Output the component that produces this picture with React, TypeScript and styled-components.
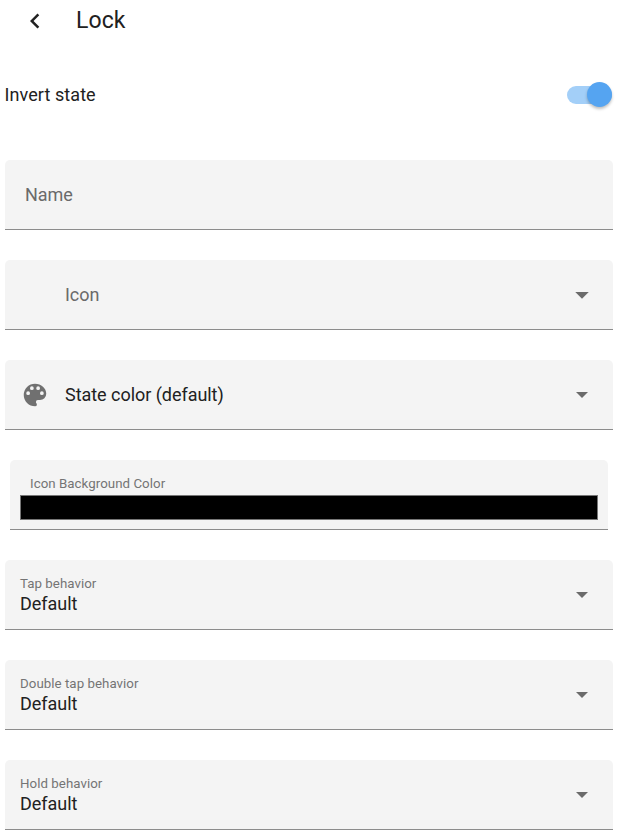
import React from "react";
import styled, { createGlobalStyle } from "styled-components";

const Global = createGlobalStyle`
  * { box-sizing: border-box; }
  body { margin: 0; background: #fff; font-family: Roboto, "Liberation Sans", sans-serif; color: #212121; }
`;
const Page = styled.main`
  width: 620px; height: 838px; overflow: hidden; padding: 0 7px 0 5px;
`;
const Header = styled.header`
  height: 40px; display: flex; align-items: center; padding-left: 15px;
`;
const BackButton = styled.button`
  width: 30px; height: 30px; margin-top: 1px; padding: 0; border: 0; background: none; display: grid; place-items: center; color: #212121;
`;
const Title = styled.h1`
  margin: 0 0 0 26px; padding-top: 2px; font-size: 23px; font-weight: 400; line-height: 40px; letter-spacing: .1px;
`;
const ToggleRow = styled.div`
  height: 110px; margin-bottom: 10px; padding: 0 1px 0 0; display: flex; align-items: center; justify-content: space-between; font-size: 18px;
`;
const ToggleLabel = styled.span`
  margin-left: -.4px; padding-bottom: 2px; letter-spacing: .07px;
`;
const Track = styled.div`
  width: 45px; height: 18px; border-radius: 9px; background: #a3cff8; display: flex; align-items: center; justify-content: flex-end;
`;
const Thumb = styled.div`
  width: 25px; height: 25px; flex: none; margin-bottom: 1px; border-radius: 50%; background: #55a4f1; box-shadow: 0 2px 3px rgba(0,0,0,.25);
`;
const Fields = styled.div`
  display: flex; flex-direction: column; gap: 30px;
`;
const Field = styled.div<{ $inset?: boolean }>`
  height: 70px; margin: 0 ${p => (p.$inset ? 5 : 0)}px; border-radius: 5px 5px 0 0; background: #f4f4f4; border-bottom: 1px solid #8c8c8c;
  display: flex; align-items: center; padding: 0 18px 0 20px;
`;
const Leading = styled.span`
  width: 40px; height: 30px; flex: none; display: flex; align-items: center; margin-left: -5px; margin-right: 5px;
`;
const Value = styled.span<{ $muted?: boolean }>`
  flex: 1; font-size: 18px; line-height: 24px; letter-spacing: -.04px; color: ${p => (p.$muted ? "#6a6a6a" : "#212121")};
`;
const Stack = styled.div`
  flex: 1; display: flex; flex-direction: column; margin-left: -5px; padding-top: 3px;
`;
const Label = styled.span`
  font-size: 13.3px; line-height: 16px; letter-spacing: .04px; color: #747474;
`;
const StackValue = styled.span`
  font-size: 18px; line-height: 24px; letter-spacing: -.04px;
`;
const ColorField = styled(Field)`
  flex-direction: column; align-items: stretch; padding: 16px 10px 0;
`;
const ColorLabel = styled(Label)`
  padding-left: 10px; margin-bottom: 3px;
`;
const Swatch = styled.div`
  height: 25px; background: #000; border: 1px solid #767676;
`;

const Arrow = ({ small = false }: { small?: boolean }) => (
  <svg width="26" height="26" viewBox="0 0 26 26">
    <path d={small ? "M7 10h12L13 16z" : "M6.25 10h13.5L13 16.75z"} fill="#6b6b6b" />
  </svg>
);
const Palette = () => (
  <svg width="30" height="30" viewBox="0 0 24 24"><path fill="#707070" d="M17.5 12a1.5 1.5 0 0 1-1.5-1.5A1.5 1.5 0 0 1 17.5 9a1.5 1.5 0 0 1 1.5 1.5 1.5 1.5 0 0 1-1.5 1.5m-3-4A1.5 1.5 0 0 1 13 6.5 1.5 1.5 0 0 1 14.5 5 1.5 1.5 0 0 1 16 6.5 1.5 1.5 0 0 1 14.5 8m-5 0A1.5 1.5 0 0 1 8 6.5 1.5 1.5 0 0 1 9.5 5 1.5 1.5 0 0 1 11 6.5 1.5 1.5 0 0 1 9.5 8m-3 4A1.5 1.5 0 0 1 5 10.5 1.5 1.5 0 0 1 6.5 9 1.5 1.5 0 0 1 8 10.5 1.5 1.5 0 0 1 6.5 12M12 3a9 9 0 0 0 0 18 1.5 1.5 0 0 0 1.5-1.5c0-.39-.15-.74-.39-1-.23-.27-.38-.62-.38-1a1.5 1.5 0 0 1 1.5-1.5H16a5 5 0 0 0 5-5c0-4.42-4.03-8-9-8Z" /></svg>
);

const behaviors = ["Tap behavior", "Double tap behavior", "Hold behavior"];

export default function App() {
  return (
    <>
      <Global />
      <Page>
        <Header>
          <BackButton aria-label="Back">
            <svg width="30" height="30" viewBox="0 0 24 24"><path fill="currentColor" d="M15.41 16.58 10.83 12l4.58-4.59L14 6l-6 6 6 6z" /></svg>
          </BackButton>
          <Title>Lock</Title>
        </Header>
        <ToggleRow>
          <ToggleLabel>Invert state</ToggleLabel>
          <Track role="switch" aria-checked="true"><Thumb /></Track>
        </ToggleRow>
        <Fields>
          <Field><Value $muted>Name</Value></Field>
          <Field><Leading /><Value $muted>Icon</Value><Arrow /></Field>
          <Field><Leading><Palette /></Leading><Value>State color (default)</Value><Arrow small /></Field>
          <ColorField $inset><ColorLabel>Icon Background Color</ColorLabel><Swatch /></ColorField>
          {behaviors.map(name => (
            <Field key={name}>
              <Stack><Label>{name}</Label><StackValue>Default</StackValue></Stack>
              <Arrow small />
            </Field>
          ))}
        </Fields>
      </Page>
    </>
  );
}
